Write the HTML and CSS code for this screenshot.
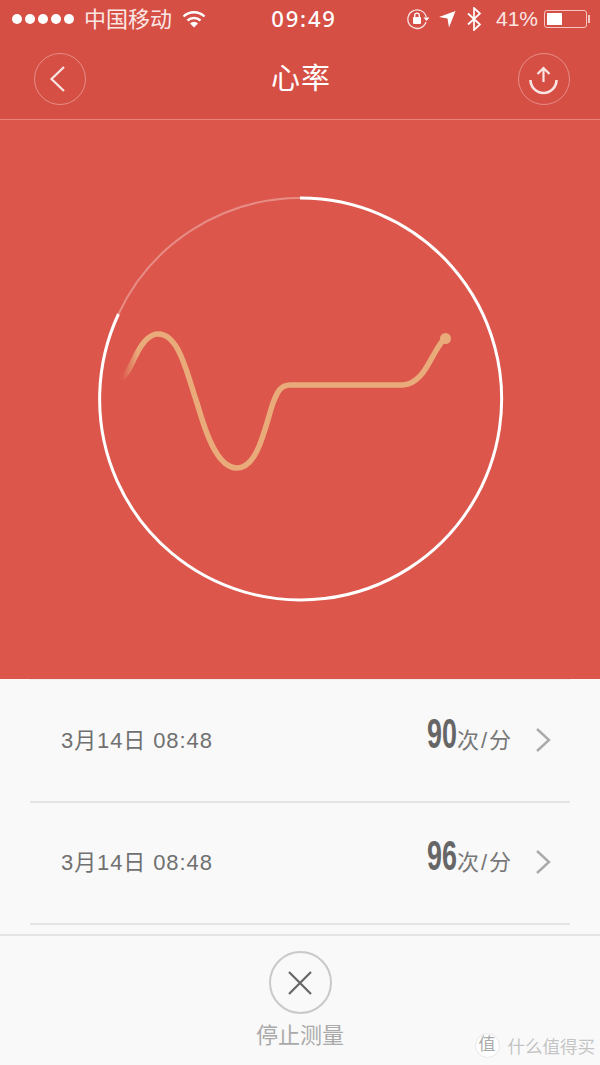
FILE: index.html
```html
<!DOCTYPE html>
<html>
<head>
    <title>心率</title>
    <meta charset="utf-8">
    <link rel="stylesheet" href="styles.css">
</head>
<body>
    <header class="top">
        <div class="status">
            <div class="status-left">
                <div class="dots"><i></i><i></i><i></i><i></i><i></i></div>
                <span class="carrier">中国移动</span>
                <svg class="wifi" width="24" height="18" viewBox="0 0 24 18">
                    <path d="M1.5 6.5a15 15 0 0 1 21 0" fill="none" stroke="#fff" stroke-width="2.4"/>
                    <path d="M5.5 10.5a9.5 9.5 0 0 1 13 0" fill="none" stroke="#fff" stroke-width="2.4"/>
                    <path d="M12 17.5l-4-4a5.6 5.6 0 0 1 8 0z" fill="#fff"/>
                </svg>
            </div>
            <span class="time">09:49</span>
            <div class="status-right">
                <svg width="24" height="22" viewBox="0 0 24 22">
                    <path d="M20 14a9.3 9.3 0 1 1 .2-5" fill="none" stroke="#fff" stroke-width="1.3" opacity=".85"/>
                    <path d="M17.5 9.500h6l-3 3.500z" fill="#fff"/>
                    <rect x="7" y="9" width="8" height="7" rx="1" fill="#fff"/>
                    <path d="M8.700 9V7.500a2.300 2.300 0 0 1 4.600 0V9" fill="none" stroke="#fff" stroke-width="1.300"/>
                </svg>
                <svg class="arrow" width="18" height="18" viewBox="0 0 18 18">
                    <path d="M17.500 1L11 17.500 9.500 8.500 1 7z" fill="#fff"/>
                </svg>
                <svg class="bt" width="16" height="24" viewBox="0 0 16 24">
                    <path d="M2 6.500l12 11-6 5.500V1l6 5.500-12 11" fill="none" stroke="#fff" stroke-width="1.700"/>
                </svg>
                <span class="pct">41%</span>
                <div class="battery"><div class="level"></div></div>
            </div>
        </div>
        <nav class="nav">
            <div class="round">
                <svg width="50" height="50" viewBox="0 0 50 50">
                    <path d="M29 13L16.500 25 29 37" fill="none" stroke="#fff" stroke-width="2.200" opacity=".85"/>
                </svg>
            </div>
            <h1 class="title">心率</h1>
            <div class="round">
                <svg width="50" height="50" viewBox="0 0 50 50">
                    <path d="M24.500 28V14M18.500 20l6-6 6 6" fill="none" stroke="#fff" stroke-width="2.200" opacity=".85"/>
                    <path d="M11.500 26a13 13 0 0 0 26 0" fill="none" stroke="#fff" stroke-width="2.600" opacity=".85"/>
                </svg>
            </div>
        </nav>
    </header>

    <section class="chart">
        <svg width="600" height="559" viewBox="0 120 600 559">
            <defs>
                <linearGradient id="fade" gradientUnits="userSpaceOnUse" x1="122" y1="0" x2="138" y2="0">
                    <stop offset="0" stop-color="#e9ab7a" stop-opacity="0"/>
                    <stop offset="1" stop-color="#e9ab7a"/>
                </linearGradient>
            </defs>
            <path d="M300 198A201 201 0 0 0 118.500 314" fill="none" stroke="#fff" stroke-opacity=".32" stroke-width="2"/>
            <path d="M300 198A201 201 0 1 1 118.500 314" fill="none" stroke="#fff" stroke-width="3"/>
            <path d="M122 378C130 371 132 362 136 355C142 343 149 334 158 334C168 334 175 342 181 356C188 372 192 389 197 403C204 427 216 468 237 468C258 468 265 427 273 403C277 393 280 385 290 385L403 385C420 384 428 364 433 356C437 349 440 343 445 338" fill="none" stroke="url(#fade)" stroke-width="5.500"/>
            <circle cx="445.500" cy="338.500" r="5.500" fill="#e9ab7a"/>
        </svg>
    </section>

    <section class="list">
        <div class="row">
            <span class="date">3月14日 08:48</span>
            <div class="value">
                <span class="num">90</span><span class="unit">次/分</span>
                <svg class="more" width="16" height="26" viewBox="0 0 16 26">
                    <path d="M2 2l12 11L2 24" fill="none" stroke="#aaa" stroke-width="2.400"/>
                </svg>
            </div>
        </div>
        <div class="row">
            <span class="date">3月14日 08:48</span>
            <div class="value">
                <span class="num">96</span><span class="unit">次/分</span>
                <svg class="more" width="16" height="26" viewBox="0 0 16 26">
                    <path d="M2 2l12 11L2 24" fill="none" stroke="#aaa" stroke-width="2.400"/>
                </svg>
            </div>
        </div>
    </section>

    <footer class="bottom">
        <div class="stop">
            <svg width="26" height="26" viewBox="0 0 26 26">
                <path d="M2 2l22 22M24 2L2 24" fill="none" stroke="#666" stroke-width="2.200"/>
            </svg>
        </div>
        <span class="stop-label">停止测量</span>
        <div class="mark">
            <span class="mark-logo">值</span>
            <span class="mark-text">什么值得买</span>
        </div>
    </footer>
</body>
</html>
```

FILE: styles.css
```css
body {
    margin: 0;
    width: 600px;
    height: 1065px;
    overflow: hidden;
    background-color: #f9f9f9;
    font-family: "Liberation Sans", "Noto Sans CJK SC", sans-serif;
}

svg {
    display: block;
}

.top {
    background-color: #d64f45;
    color: #fff;
}

.status {
    display: grid;
    grid-template-columns: 1fr auto 1fr;
    align-items: center;
    height: 38px;
    padding: 0 10px 0 12px;
}

.status-left,
.status-right {
    display: flex;
    align-items: center;
}

.status-right {
    justify-content: flex-end;
}

.dots {
    display: flex;
    gap: 3px;
}

.dots i {
    width: 10px;
    height: 10px;
    border-radius: 50%;
    background-color: #fff;
}

.carrier {
    margin-left: 10px;
    padding-bottom: 4px;
    font-size: 22px;
    color: #fbe6e4;
}

.wifi {
    margin-left: 10px;
}

.time {
    font-family: "Noto Sans", sans-serif;
    font-size: 22px;
    font-weight: 500;
    letter-spacing: 1.800px;
    margin-left: 6px;
    padding-bottom: 2px;
}

.arrow {
    margin-left: 8px;
}

.bt {
    margin-left: 10px;
}

.pct {
    margin-left: 14px;
    font-size: 21px;
    color: #fbe6e4;
}

.battery {
    position: relative;
    box-sizing: border-box;
    width: 43px;
    height: 18px;
    margin: 0 3px 0 6px;
    padding: 2px;
    border: 1px solid #f3c6c2;
    border-radius: 3px;
}

.battery::after {
    content: "";
    position: absolute;
    right: -4px;
    top: 4px;
    width: 2px;
    height: 8px;
    background-color: #f3c6c2;
}

.level {
    width: 15px;
    height: 100%;
    background-color: #fff;
}

.nav {
    display: flex;
    align-items: center;
    justify-content: space-between;
    height: 81px;
    padding: 0 30px 0 34px;
    border-bottom: 1px solid #e8847c;
}

.round {
    display: flex;
    align-items: center;
    justify-content: center;
    width: 52px;
    height: 52px;
    box-sizing: border-box;
    border: 1px solid rgba(255, 255, 255, 0.35);
    border-radius: 50%;
}

.title {
    margin: 0 2px 0 0;
    padding-bottom: 5px;
    font-size: 29px;
    font-weight: normal;
    letter-spacing: 1px;
}

.chart {
    height: 559px;
    background-color: #dc564c;
}

.list {
    height: 255px;
    padding-top: 1px;
    box-sizing: border-box;
    margin: 0 30px;
    border-top: 1px solid #eee;
}

.row {
    display: flex;
    align-items: center;
    justify-content: space-between;
    height: 120px;
    padding: 0 20px 0 31px;
    border-bottom: 2px solid #e4e4e4;
}

.date {
    padding-bottom: 6px;
    font-size: 22px;
    letter-spacing: 0.900px;
    color: #707070;
}

.value {
    display: flex;
    align-items: center;
}

.num {
    display: inline-block;
    width: 31px;
    font-size: 42px;
    font-weight: bold;
    color: #666;
    transform: scaleX(0.64);
    transform-origin: left center;
    margin-top: -14px;
}

.unit {
    padding-bottom: 6px;
    font-size: 22px;
    letter-spacing: 2px;
    margin-left: -1px;
    color: #777;
}

.more {
    margin: 0 -1px 3px 22px;
}

.bottom {
    position: relative;
    display: flex;
    flex-direction: column;
    align-items: center;
    height: 130px;
    box-sizing: border-box;
    padding-top: 15px;
    border-top: 2px solid #e4e4e4;
}

.stop {
    display: flex;
    align-items: center;
    justify-content: center;
    width: 63px;
    height: 63px;
    box-sizing: border-box;
    border: 2px solid #c9c9c9;
    border-radius: 50%;
}

.stop-label {
    margin-top: 3px;
    font-size: 22px;
    color: #aaa;
}

.mark {
    position: absolute;
    right: 5px;
    bottom: 6px;
    display: flex;
    align-items: center;
    gap: 8px;
}

.mark-logo {
    width: 25px;
    height: 25px;
    box-sizing: border-box;
    line-height: 22px;
    border: 1px solid #e8e8e8;
    border-radius: 50%;
    background-color: #fff;
    color: #aaa;
    font-size: 17px;
    text-align: center;
}

.mark-text {
    font-size: 17.500px;
    color: #c4c4c4;
    text-shadow: 0 0 2px #fff;
}
```
